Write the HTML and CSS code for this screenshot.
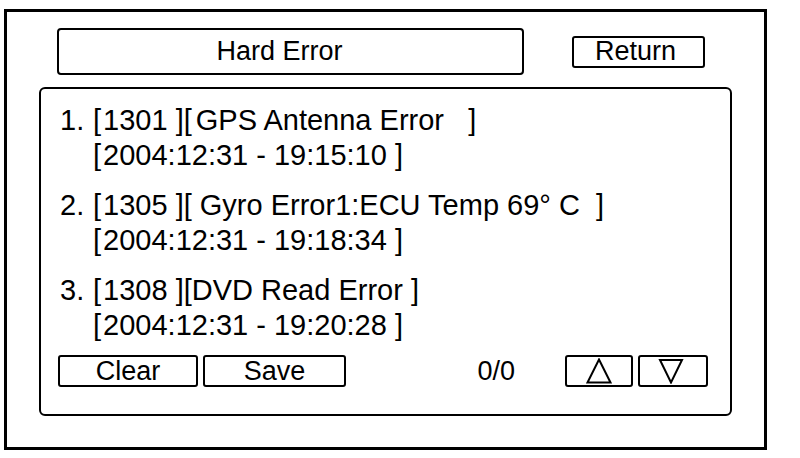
FILE: index.html
```html
<!DOCTYPE html>
<html>
<head>
<meta charset="utf-8">
<link rel="stylesheet" href="styles.css">
</head>
<body>
<div class="frame">
  <div class="header">
    <div class="title">Hard Error</div>
    <div class="btn return">Return</div>
  </div>
  <div class="panel">
    <div class="entry">
      <div class="head"><span class="num">1.</span><span class="txt">[<i class="g"></i>1301 ][<i class="g2"></i>GPS Antenna Error   ]</span></div>
      <div class="date">[<i class="g"></i>2004:12:31 - 19:15:10 ]</div>
    </div>
    <div class="entry">
      <div class="head"><span class="num">2.</span><span class="txt">[<i class="g"></i>1305 ][ Gyro Error1:ECU Temp 69° C  ]</span></div>
      <div class="date">[<i class="g"></i>2004:12:31 - 19:18:34 ]</div>
    </div>
    <div class="entry">
      <div class="head"><span class="num">3.</span><span class="txt">[<i class="g"></i>1308 ][DVD Read Error ]</span></div>
      <div class="date">[<i class="g"></i>2004:12:31 - 19:20:28 ]</div>
    </div>
    <div class="controls">
      <div class="btn clear">Clear</div>
      <div class="btn save">Save</div>
      <div class="count">0/0</div>
      <div class="btn arrow up"><svg width="26" height="26" viewBox="0 0 26 26"><polygon points="13,1.5 24.5,24.5 1.5,24.5" fill="none" stroke="#000" stroke-width="2"/></svg></div>
      <div class="btn arrow down"><svg width="26" height="26" viewBox="0 0 26 26"><polygon points="2,2 24,2 13,24.5" fill="none" stroke="#000" stroke-width="2"/></svg></div>
    </div>
  </div>
</div>
</body>
</html>
```

FILE: styles.css
```css
* { box-sizing: border-box; }
html, body { margin: 0; padding: 0; background: #fff; }
body {
  font-family: "Liberation Sans", Arial, sans-serif;
  color: #000;
  font-size: 27px;
}
.frame {
  margin: 9px 0 0 4px;
  width: 763px;
  height: 441px;
  border: 3px solid #000;
  padding: 16px 32px 0 32px;
  display: flex;
  flex-direction: column;
}
.header {
  display: flex;
  align-items: center;
  gap: 48px;
  padding: 0 27px 0 18px;
}
.title {
  width: 467px;
  height: 47px;
  border: 2px solid #000;
  border-radius: 4px;
  padding-right: 22px;
  display: flex;
  align-items: center;
  justify-content: center;
}
.btn {
  border: 2px solid #000;
  border-radius: 3px;
  height: 32px;
  display: flex;
  align-items: center;
  justify-content: center;
  line-height: 1;
}
.return { width: 133px; padding-right: 6px; }
.panel {
  margin-top: 12px;
  height: 329px;
  border: 2px solid #000;
  border-radius: 6px;
  padding: 14px 22px 0 17px;
  display: flex;
  flex-direction: column;
  gap: 15px;
}
.entry { padding-left: 2px; font-size: 29px; }
.head, .date {
  height: 35px;
  line-height: 35px;
  white-space: pre;
}
.head { display: flex; }
.num { width: 33px; }
.date { padding-left: 33px; }
.g { display: inline-block; width: 2px; }
.g2 { display: inline-block; width: 4px; }
.controls {
  margin-top: -3px;
  display: flex;
  align-items: center;
}
.clear { width: 140px; }
.save { width: 143px; margin-left: 5px; }
.count { margin-left: auto; margin-right: 50px; }
.up { width: 68px; }
.down { width: 70px; margin-left: 5px; padding-right: 5px; }
.arrow svg { display: block; }
```
